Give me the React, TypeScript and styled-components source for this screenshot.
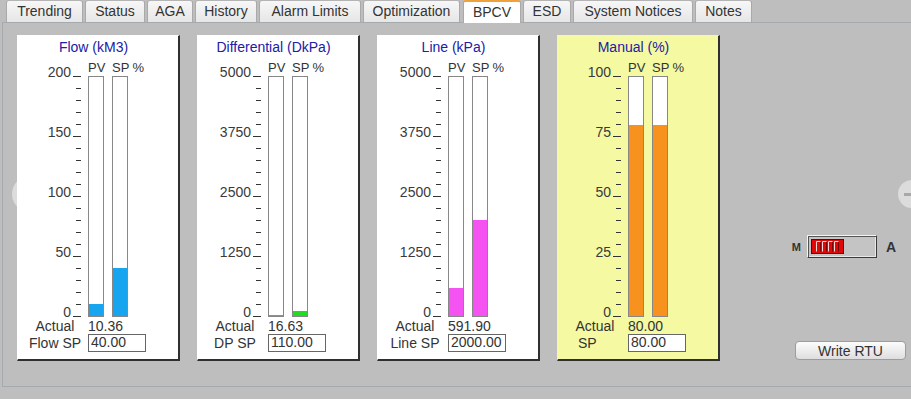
import { ReactElement } from 'react';
import styled, { createGlobalStyle } from 'styled-components';

const GlobalStyle = createGlobalStyle`
  html, body {
    margin: 0;
    padding: 0;
    width: 911px;
    height: 399px;
    overflow: hidden;
    background: #bebebe;
    font-family: 'Liberation Sans', Arial, sans-serif;
    color: #333;
  }
`;

const TabBar = styled.div`
  position: relative;
  z-index: 2;
  display: flex;
  align-items: flex-start;
  gap: 2px;
  height: 23px;
  margin-bottom: -1px;
  padding-left: 6px;
`;

const Tab = styled.div<{ $w: number; $active?: boolean }>`
  box-sizing: border-box;
  width: ${({ $w }) => $w}px;
  height: ${({ $active }) => ($active ? 23 : 22)}px;
  margin-left: ${({ $active }) => ($active ? 1 : 0)}px;
  display: flex;
  align-items: center;
  justify-content: center;
  padding-bottom: 1px;
  border: 1px solid #a9a9a9;
  border-bottom: none;
  border-top: ${({ $active }) => ($active ? '2px solid #f0a23a' : '1px solid #b4b4b4')};
  border-radius: 3px 3px 0 0;
  background: ${({ $active }) => ($active ? '#ffffff' : 'linear-gradient(#f7f7f7, #e6e6e6)')};
  font-size: 14px;
  line-height: 16px;
  color: #333;
  white-space: nowrap;
`;

const Pane = styled.div`
  position: relative;
  box-sizing: border-box;
  height: 365px;
  margin-left: 2px;
  padding: 12px 5px 0 14px;
  border: 1px solid #a3abaf;
  border-right: none;
  display: flex;
`;

const NavCircle = styled.div<{ $x: number; $y: number; $r: number }>`
  position: absolute;
  z-index: 0;
  left: ${({ $x }) => $x}px;
  top: ${({ $y }) => $y}px;
  width: ${({ $r }) => $r * 2}px;
  height: ${({ $r }) => $r * 2}px;
  border-radius: 50%;
  background: #dcdcdc;
  display: flex;
  align-items: center;
  justify-content: center;
`;

const Dash = styled.div`
  width: 17px;
  height: 3px;
  background: #a8a8a8;
`;

const Gauges = styled.div`
  display: flex;
  gap: 17px;
`;

const Panel = styled.div<{ $bg: string }>`
  position: relative;
  z-index: 1;
  box-sizing: border-box;
  width: 163px;
  height: 326px;
  padding-top: 3px;
  background: ${({ $bg }) => $bg};
  border-style: solid;
  border-width: 1px 2px 2px 1px;
  border-color: ${({ $bg }) => $bg} #2f2f2f #2f2f2f ${({ $bg }) => $bg};
  display: flex;
  flex-direction: column;
`;

const Title = styled.div`
  font-size: 14px;
  line-height: 16px;
  color: #2020a6;
  text-align: center;
  padding-right: 9px;
  margin-bottom: 5px;
  white-space: nowrap;
`;

const GaugeRow = styled.div`
  display: flex;
  height: 257px;
`;

const ScaleSvg = styled.svg`
  flex: none;
  overflow: visible;
  font-family: 'Liberation Sans', Arial, sans-serif;
`;

const BarsColumn = styled.div`
  margin-left: 7px;
  display: flex;
  flex-direction: column;
`;

const HeaderRow = styled.div`
  display: flex;
  height: 16px;
  font-size: 13px;
  line-height: 16px;
  color: #333;
`;

const HeaderCell = styled.span<{ $w?: number }>`
  width: ${({ $w }) => ($w ? `${$w}px` : 'auto')};
  white-space: nowrap;
`;

const BarsRow = styled.div`
  display: flex;
  gap: 8px;
`;

const Bar = styled.div`
  box-sizing: border-box;
  width: 16px;
  height: 241px;
  border: 1px solid #878787;
  background: #fff;
  display: flex;
  align-items: flex-end;
`;

const Fill = styled.div<{ $color: string }>`
  width: 100%;
  background: ${({ $color }) => $color};
`;

const ReadRow = styled.div<{ $h: number; $top?: number }>`
  display: flex;
  align-items: center;
  height: ${({ $h }) => $h}px;
  margin-top: ${({ $top }) => $top ?? 0}px;
  padding-left: 9px;
  font-size: 14px;
  line-height: 16px;
  color: #333;
`;

const LabelCell = styled.span<{ $left?: boolean }>`
  box-sizing: border-box;
  width: 56px;
  text-align: ${({ $left }) => ($left ? 'left' : 'center')};
  padding-left: ${({ $left }) => ($left ? 11 : 0)}px;
  white-space: nowrap;
`;

const Value = styled.span`
  margin-left: 5px;
`;

const SpInput = styled.input`
  box-sizing: border-box;
  margin: 0 0 0 5px;
  width: 58px;
  height: 18px;
  padding: 0 0 2px 2px;
  border: 1px solid #666;
  background: #fff;
  font-family: 'Liberation Sans', Arial, sans-serif;
  font-size: 14px;
  color: #333;
  outline: none;
`;

const SideColumn = styled.div`
  margin-left: auto;
  display: flex;
  flex-direction: column;
  align-items: flex-end;
`;

const SwitchRow = styled.div`
  display: flex;
  align-items: center;
  margin-top: 200px;
  padding-right: 10px;
  font-weight: bold;
  color: #333;
`;

const SwitchLetter = styled.span<{ $size: number }>`
  font-size: ${({ $size }) => $size}px;
  line-height: 16px;
`;

const Track = styled.div`
  box-sizing: border-box;
  width: 70px;
  height: 23px;
  margin: 0 9px 0 6px;
  padding: 3px 0 0 3px;
  border-style: solid;
  border-width: 1px;
  border-color: #f4f4f4 #3a3a3a #3a3a3a #f4f4f4;
  box-shadow: inset 1px 1px 0 #555, inset -1px -1px 0 #e8e8e8;
  background: #c4c4c4;
`;

const WriteButton = styled.button`
  box-sizing: border-box;
  width: 111px;
  height: 19px;
  margin-top: 83px;
  padding: 0;
  border: 1px solid #9c9c9c;
  border-radius: 4px;
  background: linear-gradient(#fcfcfc, #dedede);
  font-family: 'Liberation Sans', Arial, sans-serif;
  font-size: 14px;
  line-height: 16px;
  color: #333;
`;

interface GaugeProps {
  title: string;
  labels: string[];
  max: number;
  pv: number;
  sp: number;
  color: string;
  bg?: string;
  actual: string;
  spLabel: string;
  spValue: string;
  spLeft?: boolean;
}

function Scale({ labels }: { labels: string[] }): ReactElement {
  return (
    <ScaleSvg width={63} height={257}>
      {Array.from({ length: 21 }, (_, i) => {
        const major = i % 5 === 0;
        return <rect key={i} x={major ? 55 : 58} y={16 + 12 * i} width={major ? 8 : 5} height={1} fill="#333" />;
      })}
      {labels.map((l, j) => (
        <text key={l} x={53} y={17 + 60 * j} textAnchor="end" fontSize={14} fill="#3a3a3a">
          {l}
        </text>
      ))}
    </ScaleSvg>
  );
}

function Gauge({ title, labels, max, pv, sp, color, bg = '#ffffff', actual, spLabel, spValue, spLeft }: GaugeProps): ReactElement {
  const h = (v: number) => `${Math.max(1, Math.round((v / max) * 239))}px`;
  return (
    <Panel $bg={bg}>
      <Title>{title}</Title>
      <GaugeRow>
        <Scale labels={labels} />
        <BarsColumn>
          <HeaderRow>
            <HeaderCell $w={24}>PV</HeaderCell>
            <HeaderCell $w={20.5}>SP</HeaderCell>
            <HeaderCell>%</HeaderCell>
          </HeaderRow>
          <BarsRow>
            <Bar>
              <Fill $color={color} style={{ height: h(pv) }} />
            </Bar>
            <Bar>
              <Fill $color={color} style={{ height: h(sp) }} />
            </Bar>
          </BarsRow>
        </BarsColumn>
      </GaugeRow>
      <ReadRow $h={16} $top={1}>
        <LabelCell>Actual</LabelCell>
        <Value>{actual}</Value>
      </ReadRow>
      <ReadRow $h={18}>
        <LabelCell $left={spLeft}>{spLabel}</LabelCell>
        <SpInput readOnly value={spValue} />
      </ReadRow>
    </Panel>
  );
}

function Knob(): ReactElement {
  return (
    <svg width={33} height={15} style={{ display: 'block' }}>
      <rect x={0.5} y={0.5} width={32} height={14} fill="#e00808" stroke="#6a0000" />
      {[0, 1, 2, 3].map((i) => {
        const x = 5.5 + i * 6;
        return (
          <g key={i}>
            <path d={`M${x} 12.5 V2.5 H${x + 4}`} fill="none" stroke="#ffd6d6" strokeWidth={1} />
            <path d={`M${x + 4} 3 V12.5`} fill="none" stroke="#7a0000" strokeWidth={1} />
          </g>
        );
      })}
    </svg>
  );
}

const tabs: [string, number][] = [
  ['Trending', 77],
  ['Status', 60],
  ['AGA', 46],
  ['History', 62],
  ['Alarm Limits', 102],
  ['Optimization', 97],
  ['BPCV', 58],
  ['ESD', 48],
  ['System Notices', 120],
  ['Notes', 57],
];

const gauges: GaugeProps[] = [
  { title: 'Flow (kM3)', labels: ['200', '150', '100', '50', '0'], max: 200, pv: 10.36, sp: 40, color: '#17a5f0', actual: '10.36', spLabel: 'Flow SP', spValue: '40.00' },
  { title: 'Differential (DkPa)', labels: ['5000', '3750', '2500', '1250', '0'], max: 5000, pv: 16.63, sp: 110, color: '#22dc22', actual: '16.63', spLabel: 'DP SP', spValue: '110.00' },
  { title: 'Line (kPa)', labels: ['5000', '3750', '2500', '1250', '0'], max: 5000, pv: 591.9, sp: 2000, color: '#f552f2', actual: '591.90', spLabel: 'Line SP', spValue: '2000.00' },
  { title: 'Manual (%)', labels: ['100', '75', '50', '25', '0'], max: 100, pv: 80, sp: 80, color: '#f7921f', bg: '#f4f9a2', actual: '80.00', spLabel: 'SP', spValue: '80.00', spLeft: true },
];

export default function App(): ReactElement {
  return (
    <>
      <GlobalStyle />
      <TabBar>
        {tabs.map(([name, w]) => (
          <Tab key={name} $w={w} $active={name === 'BPCV'}>
            {name}
          </Tab>
        ))}
      </TabBar>
      <Pane>
        <NavCircle $x={9} $y={153} $r={18} />
        <NavCircle $x={895} $y={157} $r={14}>
          <Dash />
        </NavCircle>
        <Gauges>
          {gauges.map((g) => (
            <Gauge key={g.title} {...g} />
          ))}
        </Gauges>
        <SideColumn>
          <SwitchRow>
            <SwitchLetter $size={11}>M</SwitchLetter>
            <Track>
              <Knob />
            </Track>
            <SwitchLetter $size={14}>A</SwitchLetter>
          </SwitchRow>
          <WriteButton>Write RTU</WriteButton>
        </SideColumn>
      </Pane>
    </>
  );
}
